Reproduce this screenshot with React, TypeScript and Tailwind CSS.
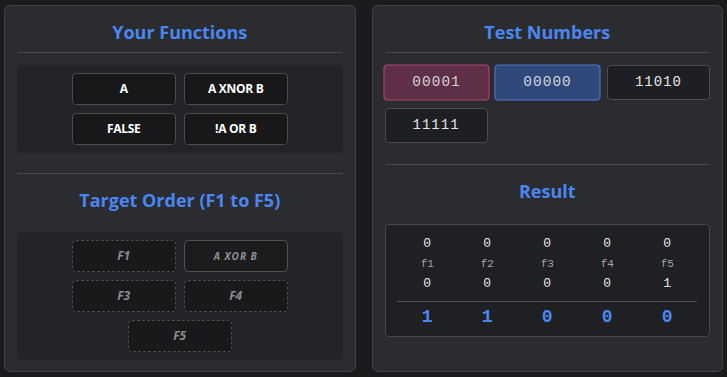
import React from 'react';

const functions = ['A', 'A XNOR B', 'FALSE', '!A OR B'];
const numbers = ['00001', '00000', '11010', '11111'];
const rows = [
    ['0', '0', '0', '0', '0'],
    ['f1', 'f2', 'f3', 'f4', 'f5'],
    ['0', '0', '0', '0', '1'],
];
const results = ['1', '1', '0', '0', '0'];

const Title = ({ children }: { children: React.ReactNode }) => (
    <h2 className="text-center text-[18px] leading-[28px] font-bold text-[#4a86f0]">{children}</h2>
);

const Slot = ({ label, filled }: { label: string; filled?: boolean }) => (
    <div
        className={`w-[104px] h-[32px] flex items-center justify-center rounded-[4px] italic font-bold ${filled
            ? 'border border-solid border-[#505155] bg-[#1c1c1f] text-[10px] tracking-[1px] text-[#8e9096]'
            : 'border border-dashed border-[#4a4b50] bg-[#19191b] text-[12px] text-[#8a8b8f]'
            }`}
    >
        {label}
    </div>
);

export default function App() {
    return (
        <div
            className="w-[727px] h-[377px] bg-[#1b1b1d] px-1 py-[5px] grid grid-cols-2 gap-4"
            style={{ fontFamily: '"Open Sans", "Noto Sans", sans-serif' }}
        >
            {/* Left panel */}
            <section className="bg-[#2b2c30] border border-[#404146] rounded-[6px] px-3 pt-3">
                <Title>Your Functions</Title>
                <div className="mt-[6px] border-t border-[#47484d]" />

                <div className="mt-3 bg-[#232427] rounded-[4px] py-2 flex justify-center">
                    <div className="grid grid-cols-2 gap-2">
                        {functions.map((f) => (
                            <div
                                key={f}
                                className="w-[104px] h-[32px] flex items-center justify-center rounded-[4px] border border-[#4a4b50] bg-[#18181a] text-white text-[12px] font-bold tracking-[-0.3px]"
                            >
                                {f}
                            </div>
                        ))}
                    </div>
                </div>

                <div className="mt-5 border-t border-[#47484d]" />
                <div className="mt-3">
                    <Title>Target Order (F1 to F5)</Title>
                </div>

                <div className="mt-[18px] bg-[#232427] rounded-[4px] py-2 flex flex-col items-center gap-2">
                    <div className="flex gap-2">
                        <Slot label="F1" />
                        <Slot label="A XOR B" filled />
                    </div>
                    <div className="flex gap-2">
                        <Slot label="F3" />
                        <Slot label="F4" />
                    </div>
                    <Slot label="F5" />
                </div>
            </section>

            {/* Right panel */}
            <section className="bg-[#2b2c30] border border-[#404146] rounded-[6px] px-3 pt-3">
                <Title>Test Numbers</Title>
                <div className="mt-[6px] border-t border-[#47484d]" />

                <div
                    className="mt-3 grid grid-cols-3 gap-2"
                    style={{ fontFamily: '"Liberation Mono", monospace' }}
                >
                    {numbers.map((n, i) => (
                        <div
                            key={n}
                            className={`h-[35px] flex items-center justify-center rounded-[4px] border text-[14px] tracking-[1px] ${i === 0
                                ? 'scale-[1.03] bg-[#5e2f47] border-[#b8466e] text-[#d6d0d4]'
                                : i === 1
                                    ? 'scale-[1.03] bg-[#31497a] border-[#4c7bd2] text-[#d0d4dc]'
                                    : 'bg-[#1e1f22] border-[#4a4b50] text-[#e4e6ea]'
                                }`}
                        >
                            {n}
                        </div>
                    ))}
                </div>

                <div className="mt-[21px] border-t border-[#47484d]" />
                <div className="mt-3">
                    <Title>Result</Title>
                </div>

                <div
                    className="mt-[19px] bg-[#1f2023] border border-[#46474c] rounded-[4px] pt-[9px] pb-[10px] flex justify-center"
                    style={{ fontFamily: '"Liberation Mono", monospace' }}
                >
                    <div className="w-[300px]">
                        {rows.map((r, ri) => (
                            <div key={ri} className="grid grid-cols-5 h-[20px] items-center">
                                {r.map((c, ci) => (
                                    <span
                                        key={ci}
                                        className={`text-center ${ri === 1 ? 'text-[11px] text-[#a3a5aa]' : 'text-[13px] text-[#e8e8ea]'}`}
                                    >
                                        {c}
                                    </span>
                                ))}
                            </div>
                        ))}
                        <div className="mt-[7px] border-t border-[#505156]" />
                        <div className="grid grid-cols-5 h-[22px] mt-[2px] items-center">
                            {results.map((c, ci) => (
                                <span key={ci} className="text-center text-[18px] font-bold text-[#4a86f0]">
                                    {c}
                                </span>
                            ))}
                        </div>
                    </div>
                </div>
            </section>
        </div>
    );
}
